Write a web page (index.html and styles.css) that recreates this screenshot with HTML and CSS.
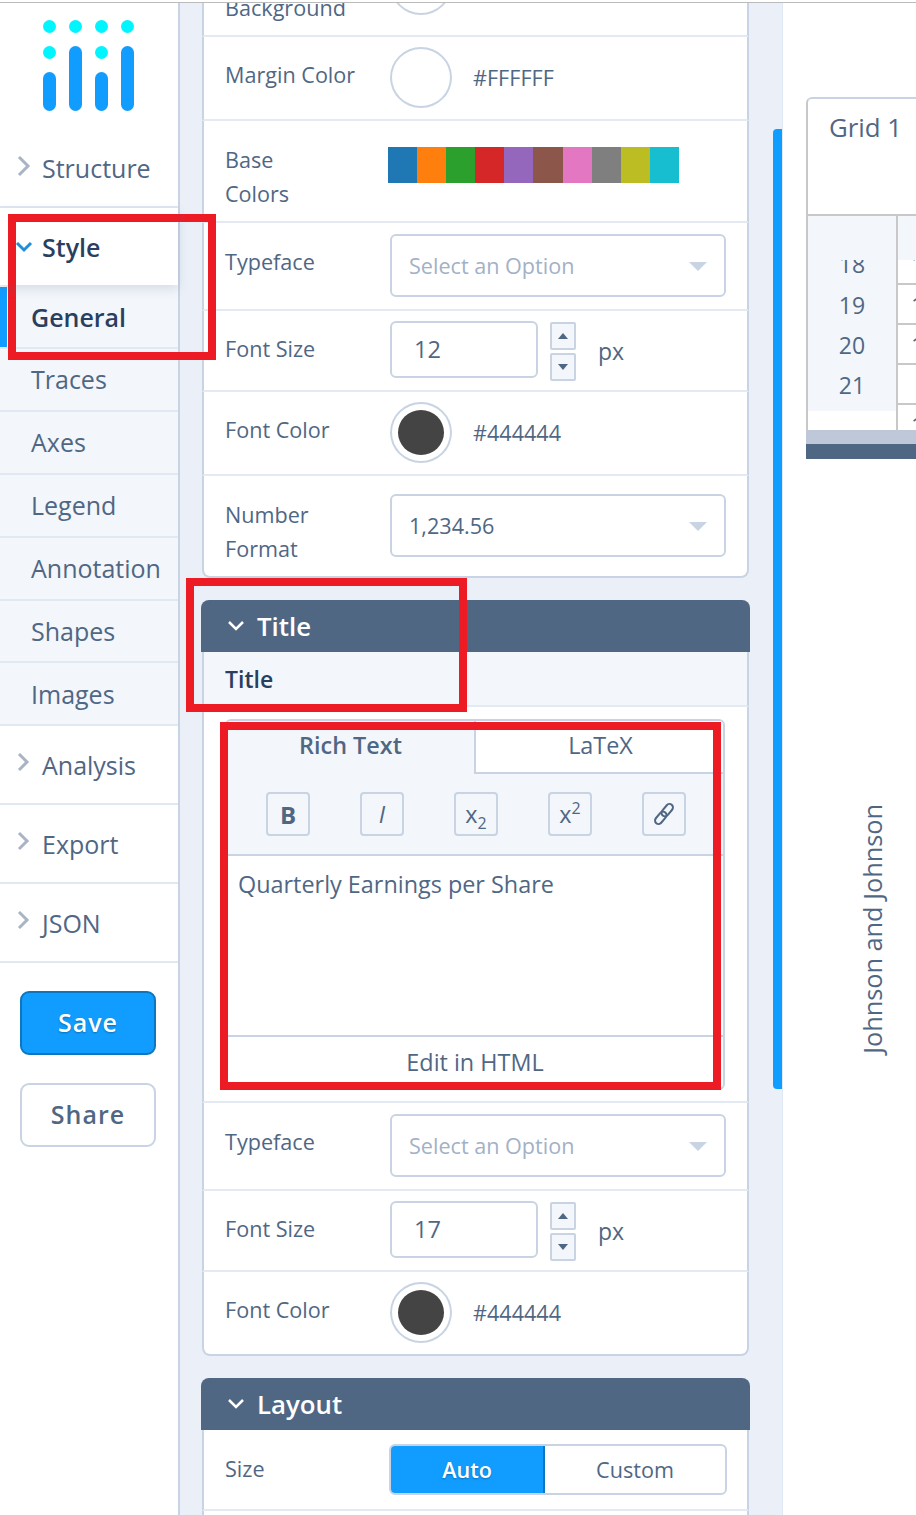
FILE: index.html
```html
<!DOCTYPE html>
<html>
  <head>
    <meta charset="utf-8">
    <title>Chart Studio</title>
    <link rel="stylesheet" href="styles.css">
  </head>
  <body>
    <div class="top_line"></div>
    <div class="app">

      <div class="sidebar">
        <div class="logo">
          <svg width="92" height="92" viewBox="0 0 92 92">
            <g fill="#00f5ff">
              <circle cx="6.5" cy="6.5" r="6.5"/><circle cx="32.5" cy="6.5" r="6.5"/><circle cx="58.5" cy="6.5" r="6.5"/><circle cx="84.5" cy="6.5" r="6.5"/>
              <circle cx="6.5" cy="32.5" r="6.5"/><circle cx="58.5" cy="32.5" r="6.5"/>
            </g>
            <g fill="#119dff">
              <rect x="0" y="52" width="13" height="39" rx="6.5"/><rect x="26" y="26" width="13" height="65" rx="6.5"/>
              <rect x="52" y="52" width="13" height="39" rx="6.5"/><rect x="78" y="26" width="13" height="65" rx="6.5"/>
            </g>
          </svg>
        </div>
        <div class="nav_group nav_structure">
          <svg class="chev_right" width="14" height="22" viewBox="0 0 14 22"><path d="M2 2l9 9-9 9"/></svg>Structure
        </div>
        <div class="nav_group nav_active">
          <svg class="chev_down" width="18" height="14" viewBox="0 0 18 14"><path d="M2 3l7 7 7-7"/></svg>Style
        </div>
        <div class="nav_sub nav_sub_active">General</div>
        <div class="nav_sub">Traces</div>
        <div class="nav_sub">Axes</div>
        <div class="nav_sub">Legend</div>
        <div class="nav_sub">Annotation</div>
        <div class="nav_sub">Shapes</div>
        <div class="nav_sub">Images</div>
        <div class="nav_group">
          <svg class="chev_right" width="14" height="22" viewBox="0 0 14 22"><path d="M2 3l8 8-8 8"/></svg>Analysis
        </div>
        <div class="nav_group">
          <svg class="chev_right" width="14" height="22" viewBox="0 0 14 22"><path d="M2 3l8 8-8 8"/></svg>Export
        </div>
        <div class="nav_group">
          <svg class="chev_right" width="14" height="22" viewBox="0 0 14 22"><path d="M2 3l8 8-8 8"/></svg>JSON
        </div>
        <div class="nav_buttons">
          <button class="btn_save">Save</button>
          <button class="btn_share">Share</button>
        </div>
      </div>

      <div class="panel">
        <div class="panel_scroll">

          <div class="card card_first">
            <div class="row row_tall">
              <div class="label label_two">Plot<br>Background</div>
              <div class="swatch"></div>
            </div>
            <div class="row row_color">
              <div class="label">Margin Color</div>
              <div class="swatch"></div><div class="hex">#FFFFFF</div>
            </div>
            <div class="row row_tall row_base">
              <div class="label label_two">Base<br>Colors</div>
              <div class="base_colors">
                <span class="c1"></span><span class="c2"></span><span class="c3"></span><span class="c4"></span><span class="c5"></span>
                <span class="c6"></span><span class="c7"></span><span class="c8"></span><span class="c9"></span><span class="c10"></span>
              </div>
            </div>
            <div class="row row_select">
              <div class="label">Typeface</div>
              <div class="dropdown dropdown_empty">Select an Option<i class="caret"></i></div>
            </div>
            <div class="row row_size">
              <div class="label">Font Size</div>
              <div class="num_input">12</div>
              <div class="spin"><span class="spin_up"></span><span class="spin_down"></span></div>
              <div class="unit">px</div>
            </div>
            <div class="row row_color">
              <div class="label">Font Color</div>
              <div class="swatch swatch_dark"><span></span></div><div class="hex">#444444</div>
            </div>
            <div class="row row_tall row_last">
              <div class="label label_two">Number<br>Format</div>
              <div class="dropdown">1,234.56<i class="caret"></i></div>
            </div>
          </div>

          <div class="section_head">
            <svg width="18" height="12" viewBox="0 0 18 12"><path d="M2 2l7 7 7-7"/></svg>Title
          </div>
          <div class="card">
            <div class="sub_head">Title</div>
            <div class="rich_row">
              <div class="rich_box">
                <div class="rich_tabs">
                  <div class="tab tab_on">Rich Text</div>
                  <div class="tab">LaTeX</div>
                </div>
                <div class="rich_tools">
                  <span class="tool tool_b">B</span>
                  <span class="tool tool_i">I</span>
                  <span class="tool"><span>x<sub>2</sub></span></span>
                  <span class="tool"><span>x<sup>2</sup></span></span>
                  <span class="tool">
                    <svg width="26" height="26" viewBox="0 0 26 26"><g transform="rotate(-50 13 13)"><rect x="1" y="9.5" width="14" height="7" rx="3.5"/><rect x="11" y="9.5" width="14" height="7" rx="3.5"/></g></svg>
                  </span>
                </div>
                <div class="rich_text">Quarterly Earnings per Share</div>
                <div class="rich_foot">Edit in HTML</div>
              </div>
            </div>
            <div class="row row_select">
              <div class="label">Typeface</div>
              <div class="dropdown dropdown_empty">Select an Option<i class="caret"></i></div>
            </div>
            <div class="row row_size">
              <div class="label">Font Size</div>
              <div class="num_input">17</div>
              <div class="spin"><span class="spin_up"></span><span class="spin_down"></span></div>
              <div class="unit">px</div>
            </div>
            <div class="row row_color row_last">
              <div class="label">Font Color</div>
              <div class="swatch swatch_dark"><span></span></div><div class="hex">#444444</div>
            </div>
          </div>

          <div class="section_head">
            <svg width="18" height="12" viewBox="0 0 18 12"><path d="M2 2l7 7 7-7"/></svg>Layout
          </div>
          <div class="card">
            <div class="row row_size">
              <div class="label label_size">Size</div>
              <div class="toggle"><span class="toggle_on">Auto</span><span>Custom</span></div>
            </div>
            <div class="row row_size"></div>
          </div>

        </div>
        <div class="scroll_thumb"></div>
      </div>

      <div class="preview">
        <div class="grid_box">
          <div class="grid_title">Grid 1</div>
          <div class="grid_head"><span></span><span></span></div>
          <div class="grid_rows">
            <div class="grid_row grid_row_cut"><span>18</span><b>1</b></div>
            <div class="grid_row"><span>19</span><b>1</b></div>
            <div class="grid_row"><span>20</span><b>1</b></div>
            <div class="grid_row"><span>21</span><b></b></div>
            <div class="grid_row grid_row_end"><span></span><b>1</b></div>
          </div>
        </div>
        <div class="grid_bar"></div>
        <div class="grid_handle"></div>
        <div class="chart_axis">Johnson and Johnson</div>
      </div>

    </div>

    <div class="mark mark_style"></div>
    <div class="mark mark_title"></div>
    <div class="mark mark_rich"></div>
  </body>
</html>
```
FILE: styles.css
```css
* {
  box-sizing: border-box;
}
html, body {
  margin: 0;
  height: 1515px;
  overflow: hidden;
}
body {
  position: relative;
  background-color: #ffffff;
  color: #506784;
  font-family: "Open Sans", "Liberation Sans", sans-serif;
  font-size: 21.6px;
}
.top_line {
  height: 3px;
  border-bottom: 1px solid #bbbbbb;
}
.app {
  display: flex;
  height: 1512px;
  overflow: hidden;
}

/* left nav */
.sidebar {
  width: 180px;
  flex: none;
  border-right: 2px solid #c8d4e3;
}
.logo {
  height: 130px;
  padding: 17px 0 0 43px;
}
.nav_group {
  display: flex;
  align-items: center;
  height: 79px;
  padding-left: 42px;
  position: relative;
  font-size: 25px;
  border-bottom: 2px solid #dfe8f3;
}
.nav_structure {
  height: 75px;
  padding-bottom: 4px;
}
.nav_active {
  height: 77px;
  color: #2a3f5f;
  font-weight: 600;
  border-bottom: none;
  box-shadow: 0 4px 10px rgba(80, 103, 132, 0.18);
  z-index: 1;
}
.chev_right, .chev_down {
  position: absolute;
  fill: none;
  stroke-width: 3;
}
.chev_right {
  left: 17px;
  top: 25px;
  stroke: #a9b4c4;
}
.nav_structure .chev_right {
  top: 22px;
}
.chev_down {
  left: 15px;
  top: 32px;
  stroke: #1f8fd8;
}
.nav_sub {
  height: 62.9px;
  padding-left: 31px;
  display: flex;
  align-items: center;
  font-size: 25px;
  background-color: #f3f6fa;
  border-bottom: 2px solid #dfe8f3;
}
.nav_sub_active {
  height: 64px;
  color: #2a3f5f;
  font-weight: 600;
  position: relative;
  padding-top: 2px;
}
.nav_sub_active::before {
  content: "";
  position: absolute;
  left: 0;
  top: 2px;
  width: 7px;
  height: 60px;
  background-color: #119dff;
}
.nav_buttons {
  display: flex;
  flex-direction: column;
  gap: 28px;
  padding: 28px 0 0 20px;
}
.nav_buttons button {
  width: 136px;
  height: 64px;
  padding-bottom: 4px;
  border-radius: 9px;
  font-family: inherit;
  font-size: 25px;
  font-weight: 600;
  letter-spacing: 1px;
}
.btn_save {
  background-color: #119dff;
  border: 2px solid #0d76bf;
  color: #ffffff;
  text-shadow: 0 1px 2px rgba(0, 0, 0, 0.3);
}
.btn_share {
  background-color: #ffffff;
  border: 2px solid #c8d4e3;
  color: #506784;
}

/* middle panel */
.panel {
  width: 603px;
  flex: none;
  position: relative;
  background-color: #ebf0f8;
  border-right: 1px solid #dfe8f3;
  overflow: hidden;
}
.panel_scroll {
  margin-top: -68px;
  padding-left: 21px;
  width: 570px;
}
.scroll_thumb {
  position: absolute;
  left: 593px;
  top: 126px;
  width: 9px;
  height: 960px;
  background-color: #119dff;
  border-radius: 4px 0 0 4px;
}
.card {
  width: 549px;
  padding: 0 1px;
  margin-bottom: 22px;
}
.card > * {
  background-color: #ffffff;
  border-left: 2px solid #c8d4e3;
  border-right: 2px solid #c8d4e3;
}
.row {
  display: flex;
  align-items: center;
  padding-left: 21px;
  border-bottom: 2px solid #e4eaf3;
}
.row_tall {
  height: 102px;
}
.row_color {
  height: 84px;
}
.row_select {
  height: 88px;
}
.row_size {
  height: 81px;
}
.row_last {
  border-bottom: 2px solid #c8d4e3;
  border-radius: 0 0 8px 8px;
}
.label {
  width: 165px;
  flex: none;
  line-height: 34px;
}
.row_color .label {
  margin-top: -7px;
}
.row_select .label {
  margin-top: -9px;
}
.row_size .label {
  margin-top: -4px;
}
.row_size .label_size {
  margin-top: -2px;
}
.row_tall .label_two {
  margin-top: 12px;
}
.swatch {
  width: 62px;
  height: 61px;
  margin-top: -2px;
  border: 2px solid #c8d4e3;
  border-radius: 50%;
  padding: 6px;
  background-color: #ffffff;
}
.swatch_dark span {
  display: block;
  width: 100%;
  height: 100%;
  border-radius: 50%;
  background-color: #444444;
}
.hex {
  margin-left: 21px;
  margin-top: -1px;
}
.row_base {
  align-items: flex-start;
  padding-top: 26px;
}
.row_base .label_two {
  margin-top: -4px;
}
.base_colors {
  display: flex;
  margin-left: -2px;
}
.base_colors span {
  width: 29.1px;
  height: 36px;
}
.c1 { background-color: #1f77b4; }
.c2 { background-color: #ff7f0e; }
.c3 { background-color: #2ca02c; }
.c4 { background-color: #d62728; }
.c5 { background-color: #9467bd; }
.c6 { background-color: #8c564b; }
.c7 { background-color: #e377c2; }
.c8 { background-color: #7f7f7f; }
.c9 { background-color: #bcbd22; }
.c10 { background-color: #17becf; }
.dropdown {
  width: 336px;
  height: 63px;
  margin-top: -2px;
  border: 2px solid #c8d4e3;
  border-radius: 6px;
  padding-left: 17px;
  display: flex;
  align-items: center;
  position: relative;
}
.dropdown_empty {
  color: #a2b1c6;
}
.caret {
  position: absolute;
  right: 17px;
  top: 26px;
  border-left: 9px solid transparent;
  border-right: 9px solid transparent;
  border-top: 9px solid #c8d4e3;
}
.num_input {
  width: 148px;
  height: 57px;
  border: 2px solid #c8d4e3;
  border-radius: 6px;
  padding-left: 22px;
  display: flex;
  align-items: center;
  margin-top: -3px;
  font-size: 23.6px;
}
.spin {
  display: flex;
  flex-direction: column;
  gap: 3px;
  margin-left: 12px;
  margin-top: 2px;
}
.spin span {
  width: 26px;
  height: 28px;
  background-color: #f3f6fa;
  border: 2px solid #c8d4e3;
  border-radius: 2px;
  position: relative;
}
.spin_up::after, .spin_down::after {
  content: "";
  position: absolute;
  left: 6px;
  top: 9px;
  border-left: 5px solid transparent;
  border-right: 5px solid transparent;
}
.spin_up::after {
  border-bottom: 6px solid #506784;
}
.spin_down::after {
  border-top: 6px solid #506784;
}
.unit {
  margin-left: 22px;
  font-size: 23px;
}
.section_head {
  display: flex;
  align-items: center;
  width: 549px;
  height: 52px;
  padding-left: 26px;
  gap: 12px;
  background-color: #506784;
  color: #ffffff;
  font-size: 25.8px;
  font-weight: 600;
  border-radius: 8px 8px 0 0;
}
.section_head svg {
  fill: none;
  stroke: #ffffff;
  stroke-width: 2.5;
}
.sub_head {
  height: 55px;
  padding-left: 21px;
  display: flex;
  align-items: center;
  font-size: 23px;
  font-weight: 600;
  color: #2a3f5f;
  background-color: #f3f6fa !important;
  border-bottom: 2px solid #e4eaf3;
}
.rich_row {
  height: 396px;
  padding: 12px 22px 0 21px;
  border-bottom: 2px solid #e4eaf3;
}
.rich_box {
  width: 500px;
  height: 371px;
  border: 2px solid #c8d4e3;
  border-radius: 6px;
  overflow: hidden;
  font-size: 23.4px;
}
.rich_tabs {
  display: flex;
  height: 53px;
}
.tab {
  flex: 1;
  display: flex;
  align-items: center;
  justify-content: center;
  border-left: 2px solid #c8d4e3;
  border-bottom: 2px solid #c8d4e3;
  padding: 0 0 4px 2px;
}
.tab_on {
  flex: none;
  width: 247px;
  font-weight: 600;
  background-color: #f3f6fa;
  border: none;
  padding: 0 0 6px;
}
.rich_tools {
  display: flex;
  justify-content: space-between;
  align-items: flex-start;
  height: 82px;
  padding: 18px 37px 0 39px;
  background-color: #f3f6fa;
  border-bottom: 2px solid #c8d4e3;
}
.tool {
  width: 44px;
  height: 44px;
  display: flex;
  align-items: center;
  justify-content: center;
  border: 2px solid #c8d4e3;
  border-radius: 4px;
  background-color: #f3f6fa;
}
.tool sub, .tool sup {
  font-size: 16px;
  line-height: 0;
}
.tool svg {
  fill: none;
  stroke: #506784;
  stroke-width: 2;
}
.tool_b {
  font-weight: 700;
  font-size: 24px;
}
.tool_i {
  font-style: italic;
}
.rich_text {
  height: 181px;
  padding: 10px 11px;
  line-height: 36px;
  border-bottom: 2px solid #c8d4e3;
}
.rich_foot {
  height: 52px;
  padding-bottom: 2px;
  display: flex;
  align-items: center;
  justify-content: center;
}
.toggle {
  display: flex;
  width: 338px;
  height: 51px;
  margin-left: -1px;
  border: 2px solid #c8d4e3;
  border-radius: 6px;
  overflow: hidden;
  margin-top: -1px;
}
.toggle span {
  flex: 1;
  display: flex;
  align-items: center;
  justify-content: center;
}
.toggle .toggle_on {
  flex: none;
  width: 156px;
  background-color: #119dff;
  color: #ffffff;
  font-weight: 600;
  margin: -2px 0 -2px -2px;
  border: 2px solid #0d76bf;
  border-left-color: #119dff;
  border-top-color: #119dff;
  text-shadow: 0 1px 2px rgba(0, 0, 0, 0.3);
}

/* right side preview */
.preview {
  flex: 1;
  min-width: 0;
  padding: 94px 0 0 23px;
  overflow: hidden;
}
.grid_box {
  width: 200px;
  height: 333px;
  border-left: 2px solid #c8c8c8;
  border-top: 2px solid #c8d4e3;
  border-radius: 6px 0 0 0;
  overflow: hidden;
}
.grid_title {
  height: 117px;
  padding: 11px 0 0 21px;
  font-size: 25.8px;
  border-bottom: 2px solid #c8c8c8;
  line-height: 34px;
}
.grid_head {
  display: flex;
  height: 44px;
  background-color: #f3f6fa;
}
.grid_head span:first-child {
  width: 90px;
  border-right: 2px solid #c8c8c8;
}
.grid_rows {
  height: 170px;
  overflow: hidden;
  font-size: 23px;
}
.grid_row {
  display: flex;
  height: 40px;
  line-height: 40px;
}
.grid_row span {
  width: 90px;
  flex: none;
  text-align: center;
  background-color: #f3f6fa;
  border-right: 2px solid #c8c8c8;
}
.grid_row b {
  flex: 1;
  padding-left: 13px;
  font-weight: 400;
  border-bottom: 2px solid #c8c8c8;
}
.grid_row_cut {
  height: 25px;
}
.grid_row_cut span, .grid_row_cut b {
  line-height: 8px;
}
.grid_row_end span {
  background: linear-gradient(#f3f6fa 6px, #ffffff 6px);
}
.grid_bar {
  height: 14px;
  background-color: #bec8d9;
}
.grid_handle {
  height: 15px;
  background-color: #506784;
}
.chart_axis {
  writing-mode: vertical-rl;
  transform: rotate(180deg);
  margin: 345px 0 0 49px;
  font-size: 25.3px;
  color: #506784;
  white-space: nowrap;
  line-height: 34px;
}

/* red highlight boxes drawn over the page */
.mark {
  position: absolute;
  border: 8px solid #ed1c24;
}
.mark_style {
  left: 8px;
  top: 214px;
  width: 208px;
  height: 146px;
}
.mark_title {
  left: 186px;
  top: 578px;
  width: 281px;
  height: 134px;
}
.mark_rich {
  left: 220px;
  top: 722px;
  width: 501px;
  height: 368px;
}
```
